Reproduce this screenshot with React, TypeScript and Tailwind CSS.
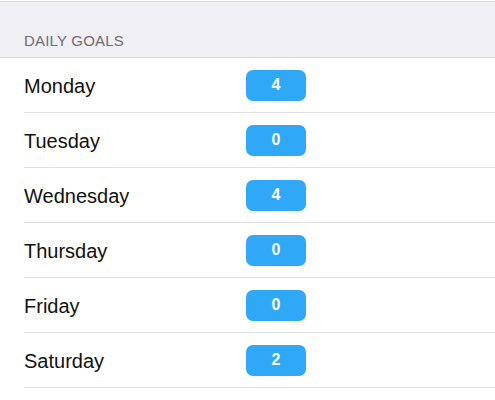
const goals = [
  { day: 'Monday', value: 4 },
  { day: 'Tuesday', value: 0 },
  { day: 'Wednesday', value: 4 },
  { day: 'Thursday', value: 0 },
  { day: 'Friday', value: 0 },
  { day: 'Saturday', value: 2 },
  { day: 'Sunday', value: 0 }
]

const App = () => {
  return (
    <div className="h-[400px] w-[495px] overflow-hidden bg-white font-['Liberation_Sans',Arial,sans-serif]">
      {/* Section header */}
      <div className="border-b border-[#dcdcdf] bg-[#efeff4]">
        <div className="mt-px h-px bg-[#d7d7db]" />
        <div className="px-6 pb-[7px] pt-[30px] text-[15px] leading-[18px] tracking-[0.2px] text-[#6d6d72]">DAILY GOALS</div>
      </div>

      {/* Rows */}
      <div>
        {goals.map((g) => (
          <div
            key={g.day}
            className="ml-6 box-border grid h-[55px] grid-cols-[222px_60px] items-center border-b border-[#e0e0e2]"
          >
            <span className="pt-px text-[20px] leading-6 text-[#111]">{g.day}</span>
            <span className="flex h-[31px] w-[60px] items-center justify-center rounded-[7px] bg-[#2fa8f7] text-[16px] font-bold text-white">
              {g.value}
            </span>
          </div>
        ))}
      </div>
    </div>
  )
}

export default App
